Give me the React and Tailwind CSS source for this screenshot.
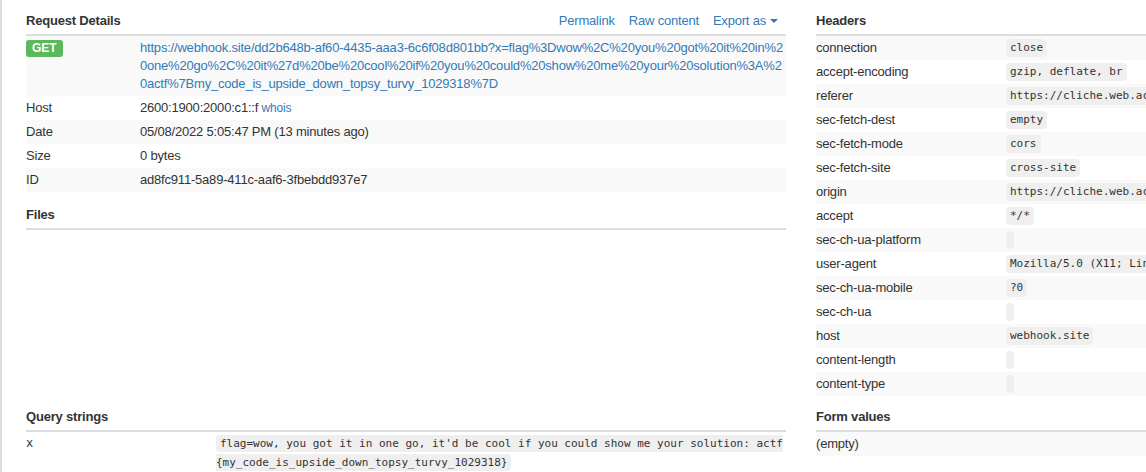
import React from 'react';

const headers = [
  ['connection', 'close'],
  ['accept-encoding', 'gzip, deflate, br'],
  ['referer', 'https://cliche.web.actf.co/'],
  ['sec-fetch-dest', 'empty'],
  ['sec-fetch-mode', 'cors'],
  ['sec-fetch-site', 'cross-site'],
  ['origin', 'https://cliche.web.actf.co'],
  ['accept', '*/*'],
  ['sec-ch-ua-platform', ''],
  ['user-agent', 'Mozilla/5.0 (X11; Linux x86_64) AppleWebKit/537.36 (KHTML, like Gecko)'],
  ['sec-ch-ua-mobile', '?0'],
  ['sec-ch-ua', ''],
  ['host', 'webhook.site'],
  ['content-length', ''],
  ['content-type', ''],
];

const SectionHeading = ({ title, children }) => (
  <div className="flex items-center justify-between border-b-2 border-[#ddd] pt-[12px] pb-[4px] leading-[18px]">
    <h4 className="text-[13px] font-bold text-[#333]">{title}</h4>
    {children}
  </div>
);

const Code = ({ children }) => (
  <code className="inline-block h-[18px] rounded-[4px] bg-[#efefef] px-1 align-top font-['DejaVu_Sans_Mono',monospace] text-[11px] leading-[18px] tracking-normal whitespace-nowrap text-[#333]">
    {children}
  </code>
);

const DetailRow = ({ label, children }) => (
  <div className="grid grid-cols-[114px_1fr] py-[3px] leading-[18px] odd:bg-[#f9f9f9]">
    <div>{label}</div>
    <div>{children}</div>
  </div>
);

export default function App() {
  return (
    <div className="h-[472px] w-full overflow-hidden border-l-2 border-[#ddd] bg-white pl-6 font-['Liberation_Sans',Arial,sans-serif] text-[13px] tracking-[-0.2px] text-[#333]">
      <div className="grid grid-cols-[760px_400px] gap-x-[30px]">
        {/* request details + files */}
        <div className="flex flex-col">
          <SectionHeading title="Request Details">
            <div className="flex items-center gap-[14px] pr-2 text-[#337ab7]">
              <a href="#">Permalink</a>
              <a href="#">Raw content</a>
              <a href="#" className="flex items-center">
                Export as
                <span className="ml-[4px] inline-block h-0 w-0 border-x-4 border-t-4 border-x-transparent border-t-[#337ab7]" />
              </a>
            </div>
          </SectionHeading>
          <div>
            <DetailRow
              label={
                <span className="mt-[1px] inline-block rounded-[3px] bg-[#5cb85c] px-[6px] py-[1px] text-[12px] leading-[15px] font-bold tracking-normal text-white">
                  GET
                </span>
              }
            >
              <a href="#" className="block text-[#337ab7]">
                <span className="block whitespace-nowrap">https://webhook.site/dd2b648b-af60-4435-aaa3-6c6f08d801bb?x=flag%3Dwow%2C%20you%20got%20it%20in%2</span>
                <span className="block whitespace-nowrap">0one%20go%2C%20it%27d%20be%20cool%20if%20you%20could%20show%20me%20your%20solution%3A%2</span>
                <span className="block whitespace-nowrap">0actf%7Bmy_code_is_upside_down_topsy_turvy_1029318%7D</span>
              </a>
            </DetailRow>
            <DetailRow label="Host">
              2600:1900:2000:c1::f <a href="#" className="text-[12px] text-[#337ab7]">whois</a>
            </DetailRow>
            <DetailRow label="Date">05/08/2022 5:05:47 PM (13 minutes ago)</DetailRow>
            <DetailRow label="Size">0 bytes</DetailRow>
            <DetailRow label="ID">ad8fc911-5a89-411c-aaf6-3fbebdd937e7</DetailRow>
          </div>
          <div className="mt-[2px]">
            <SectionHeading title="Files" />
          </div>
        </div>

        {/* headers */}
        <div>
          <SectionHeading title="Headers" />
          <div>
            {headers.map(([k, v]) => (
              <div key={k} className="grid grid-cols-[190px_1fr] py-[3px] leading-[18px] odd:bg-[#f9f9f9]">
                <div>{k}</div>
                <div className="whitespace-nowrap">
                  <Code>{v}</Code>
                </div>
              </div>
            ))}
          </div>
        </div>

        {/* query strings */}
        <div>
          <SectionHeading title="Query strings" />
          <div className="grid grid-cols-[190px_1fr] py-[2px] leading-[18px]">
            <div className="font-['DejaVu_Sans_Mono',monospace] text-[12px] tracking-normal">x</div>
            <div>
              <code className="rounded-[4px] bg-[#efefef] px-1 py-[2px] font-['DejaVu_Sans_Mono',monospace] text-[11px] leading-[18px] tracking-normal">
                flag=wow, you got it in one go, it'd be cool if you could show me your solution: actf
                <br />
                {'{my_code_is_upside_down_topsy_turvy_1029318}'}
              </code>
            </div>
          </div>
        </div>

        {/* form values */}
        <div>
          <SectionHeading title="Form values" />
          <div className="bg-[#f9f9f9] py-[3px] leading-[18px]">(empty)</div>
        </div>
      </div>
    </div>
  );
}
